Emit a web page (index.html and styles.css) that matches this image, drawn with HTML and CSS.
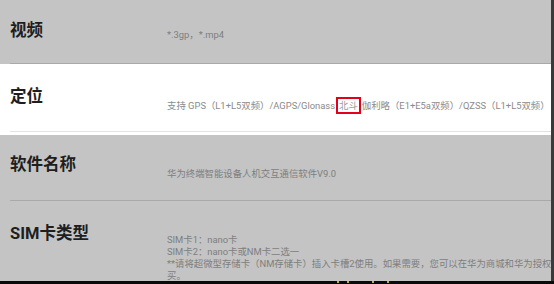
FILE: index.html
```html
<!DOCTYPE html>
<html lang="zh-CN">
<head>
<meta charset="utf-8">
<link rel="stylesheet" href="styles.css">
</head>
<body>
<div class="frame">
  <div class="main">
    <div class="content">
      <section class="row row-dim row-video">
        <div class="inner">
          <div class="title">视频</div>
          <div class="value"><div class="line">*.3gp，*.mp4</div></div>
        </div>
      </section>
      <section class="row row-lit row-gps">
        <div class="inner">
          <div class="title">定位</div>
          <div class="value"><div class="line">支持 GPS（L1+L5双频）/AGPS/Glonass<span class="mark">北斗</span>伽利略（E1+E5a双频）/QZSS（L1+L5双频）</div></div>
        </div>
      </section>
      <section class="row row-dim row-soft">
        <div class="inner">
          <div class="title">软件名称</div>
          <div class="value"><div class="line">华为终端智能设备人机交互通信软件V9.0</div></div>
        </div>
      </section>
      <section class="row row-dim row-sim">
        <div class="inner last">
          <div class="title">SIM卡类型</div>
          <div class="value">
            <div class="line">SIM卡1：nano卡</div>
            <div class="line">SIM卡2：nano卡或NM卡二选一</div>
            <div class="line">**请将超微型存储卡（NM存储卡）插入卡槽2使用。如果需要，您可以在华为商城和华为授权体验店购</div>
            <div class="line">买。</div>
          </div>
        </div>
      </section>
    </div>
    <div class="edge"></div>
  </div>
  <div class="bottom-bar">
    <span class="speck s1"></span><span class="speck s2"></span><span class="speck s3"></span><span class="speck s4"></span>
  </div>
</div>
</body>
</html>
```

FILE: styles.css
```css
* { box-sizing: border-box; }
html, body {
  margin: 0;
  padding: 0;
  width: 554px;
  height: 284px;
  overflow: hidden;
  background: #c4c4c4;
  font-family: Roboto, "Noto Sans CJK SC", sans-serif;
}
.frame {
  display: flex;
  flex-direction: column;
  width: 554px;
  height: 284px;
}
.main {
  display: flex;
  height: 281px;
  overflow: hidden;
}
.content {
  width: 551px;
  flex: none;
  display: flex;
  flex-direction: column;
}
.edge {
  flex: 1;
  background: #3a3a3a;
}
.row { padding-left: 10px; }
.row-dim { background: #c4c4c4; }
.row-lit { background: #ffffff; }
.inner {
  display: grid;
  grid-template-columns: 157px 1fr;
  border-bottom: 1px solid #a9a9a9;
}
.title {
  font-size: 16.5px;
  font-weight: 700;
  line-height: 20px;
  color: #1e1e1e;
  white-space: nowrap;
}
.value {
  font-size: 9.4px;
  line-height: 12px;
  color: #7e7e7e;
  white-space: nowrap;
}
.row-video .inner { height: 64px; }
.row-video .title { padding-top: 21px; }
.row-video .value { padding-top: 29px; }

.row-gps { padding-bottom: 3px; }
.row-gps .inner { height: 68px; border-bottom-color: #e2e2e2; }
.row-gps .title { padding-top: 23px; }
.row-gps .value { padding-top: 33px; color: #8a8a8a; }

.row-soft .inner { height: 66px; }
.row-soft .title { padding-top: 20px; }
.row-soft .value { padding-top: 33px; }

.row-sim .inner { border-bottom: none; }
.row-sim .title { padding-top: 23px; }
.row-sim .value { padding-top: 33px; }

.mark {
  display: inline-block;
  border: 2px solid #e3001b;
  padding: 1px 1px;
  line-height: 11px;
  margin: 0 1px;
  color: #9a9a9a;
}

.bottom-bar {
  height: 3px;
  background: #0a0a0a;
  display: flex;
  padding-left: 337px;
}
.speck {
  height: 2px;
  width: 2px;
  background: #c8b430;
}
.s2 { margin-left: 8px; }
.s3 { margin-left: 23px; }
.s4 { margin-left: 13px; }
```
